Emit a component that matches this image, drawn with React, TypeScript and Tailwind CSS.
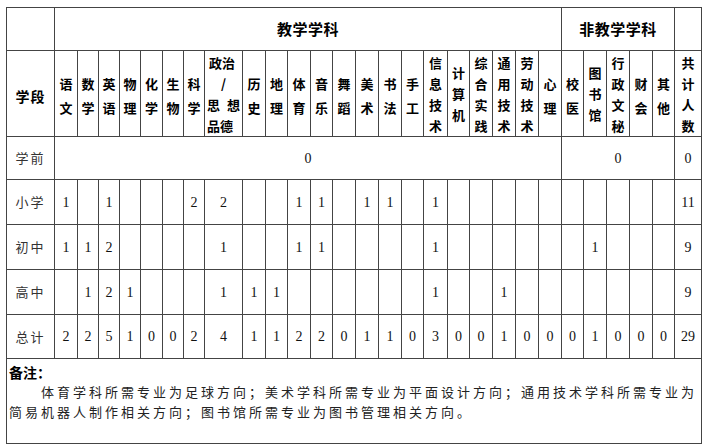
import React from "react";

const cols = [48, 23, 21, 21, 21, 22, 21, 21, 38, 23, 22, 23, 22, 23, 23, 23, 22, 24, 22, 23, 23, 23, 23, 22, 23, 23, 23, 22, 27];

const heads: (string[] | null)[] = [
  ["语", "文"], ["数", "学"], ["英", "语"], ["物", "理"], ["化", "学"], ["生", "物"], ["科", "学"],
  null,
  ["历", "史"], ["地", "理"], ["体", "育"], ["音", "乐"], ["舞", "蹈"], ["美", "术"], ["书", "法"], ["手", "工"],
  ["信", "息", "技", "术"], ["计", "算", "机"], ["综", "合", "实", "践"], ["通", "用", "技", "术"], ["劳", "动", "技", "术"], ["心", "理"],
  ["校", "医"], ["图", "书", "馆"], ["行", "政", "文", "秘"], ["财", "会"], ["其", "他"], ["共", "计", "人", "数"],
];

type V = number | "";
const rows: { label: string; h: string; vals: V[] }[] = [
  { label: "小学", h: "h-[45px]", vals: [1, "", 1, "", "", "", 2, 2, "", "", 1, 1, "", 1, 1, "", 1, "", "", "", "", "", "", "", "", "", "", 11] },
  { label: "初中", h: "h-[45px]", vals: [1, 1, 2, "", "", "", "", 1, "", "", 1, 1, "", "", "", "", 1, "", "", "", "", "", "", 1, "", "", "", 9] },
  { label: "高中", h: "h-[45px]", vals: ["", 1, 2, 1, "", "", "", 1, 1, 1, "", "", "", "", "", "", 1, "", "", 1, "", "", "", "", "", "", "", 9] },
  { label: "总计", h: "h-[44px]", vals: [2, 2, 5, 1, 0, 0, 2, 4, 1, 1, 2, 2, 0, 1, 1, 0, 3, 0, 0, 1, 0, 0, 0, 1, 0, 0, 0, 29] },
];

const td = "border border-[#444] p-0";
const cjk = "font-['Noto_Sans_CJK_SC',sans-serif]";
const num = "font-['Liberation_Serif','Noto_Sans_CJK_SC',serif] text-[14px] text-[#111]";

function Stack({ chars }: { chars: string[] }) {
  const two = chars.length <= 2;
  return (
    <div className={`flex flex-col items-center font-bold text-[13px] text-black ${two ? "leading-[24px] pt-[4px]" : "leading-[21px]"}`}>
      {chars.map((c, i) => (
        <span key={i}>{c}</span>
      ))}
    </div>
  );
}

export default function App() {
  return (
    <div className={`bg-white w-[707px] h-[448px] pt-[7px] pl-[6px] ${cjk}`}>
      <table className="table-fixed border-collapse w-[695px]">
        <colgroup>
          {cols.map((w, i) => (
            <col key={i} style={{ width: w }} />
          ))}
        </colgroup>
        <tbody>
          <tr className="h-[43px]">
            <td className={td}></td>
            <td className={`${td} text-center font-bold text-[15px] tracking-[0.5px] text-black`} colSpan={22}>
              教学学科
            </td>
            <td className={`${td} text-center font-bold text-[15px] tracking-[0.5px] text-black`} colSpan={5}>
              非教学学科
            </td>
            <td className={td}></td>
          </tr>
          <tr className="h-[86px]">
            <td className={`${td} text-center font-bold text-[14px] tracking-[1px] text-black pt-[6px]`}>学段</td>
            {heads.map((h, i) =>
              h ? (
                <td key={i} className={`${td} align-middle`}>
                  <Stack chars={h} />
                </td>
              ) : (
                <td key={i} className={`${td} align-middle`}>
                  <div className="flex flex-col font-bold text-[13px] leading-[21px] text-black px-[2px]">
                    <span className="pl-[2px]">政治</span>
                    <span className="text-center">/</span>
                    <span className="flex justify-between">
                      <span>思</span>
                      <span>想</span>
                    </span>
                    <span>品德</span>
                  </div>
                </td>
              )
            )}
          </tr>
          <tr className="h-[43px]">
            <td className={`${td} text-center text-[13px] tracking-[2px] text-[#333]`}>学前</td>
            <td className={`${td} text-center ${num}`} colSpan={22}>0</td>
            <td className={`${td} text-center ${num}`} colSpan={5}>0</td>
            <td className={`${td} text-center ${num}`}>0</td>
          </tr>
          {rows.map((r) => (
            <tr key={r.label} className={r.h}>
              <td className={`${td} text-center text-[13px] tracking-[2px] text-[#333]`}>{r.label}</td>
              {r.vals.map((v, i) => (
                <td key={i} className={`${td} text-center ${num}`}>
                  {v}
                </td>
              ))}
            </tr>
          ))}
          <tr className="h-[85px]">
            <td className={`${td} align-top text-left px-[2px] pt-[3px]`} colSpan={29}>
              <div className="font-bold text-[14px] leading-[20px] text-black">备注：</div>
              <div className="text-[13px] leading-[20px] tracking-[3px] text-[#222] whitespace-nowrap pl-[32px]">
                体育学科所需专业为足球方向；美术学科所需专业为平面设计方向；通用技术学科所需专业为
              </div>
              <div className="text-[13px] leading-[20px] tracking-[3px] text-[#222] whitespace-nowrap">
                简易机器人制作相关方向；图书馆所需专业为图书管理相关方向。
              </div>
            </td>
          </tr>
        </tbody>
      </table>
    </div>
  );
}
